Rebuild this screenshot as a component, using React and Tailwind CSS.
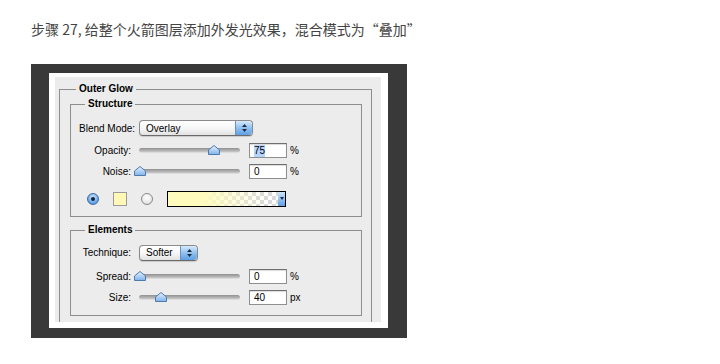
function Thumb({ left }) {
  return (
    <svg
      className="absolute top-[-3px]"
      style={{ left: left - 6 }}
      width="12"
      height="10"
      viewBox="0 0 12 10"
    >
      <defs>
        <linearGradient id="tg" x1="0" y1="0" x2="0" y2="1">
          <stop offset="0" stopColor="#e8f3ff" />
          <stop offset="1" stopColor="#7fb2ea" />
        </linearGradient>
      </defs>
      <path d="M6 0.5 L11.5 5 L11.5 9.5 L0.5 9.5 L0.5 5 Z" fill="url(#tg)" stroke="#4f79a8" strokeWidth="1" />
    </svg>
  );
}

function Slider({ pos }) {
  return (
    <div className="relative w-[101px] h-[5px] rounded-full bg-linear-to-b from-[#8f8f8f] to-[#c9c9c9] border-b border-[#dcdcdc]">
      <Thumb left={pos} />
    </div>
  );
}

function Field({ value, unit, selected }) {
  return (
    <div className="flex items-center">
      <div className="ml-[9px] w-[38px] h-[15px] bg-white border border-[#8f8f8f] border-t-[#6f6f6f] shadow-[inset_0_1px_1px_rgba(0,0,0,0.15)] pl-[4px] flex items-center leading-[12px]">
        {selected ? <span className="bg-[#b5d5ff]">{value}</span> : value}
      </div>
      <span className="ml-[3px]">{unit}</span>
    </div>
  );
}

function Stepper() {
  return (
    <div className="w-[17px] h-full rounded-r-[4px] bg-linear-to-b from-[#d7eafd] via-[#8fc0f1] to-[#5f9fe4] border-l border-[#6d8fb8] flex flex-col items-center justify-center gap-[2px]">
      <svg width="5" height="3" viewBox="0 0 5 3"><path d="M2.5 0 L5 3 L0 3 Z" fill="#1d2c40" /></svg>
      <svg width="5" height="3" viewBox="0 0 5 3"><path d="M0 0 L5 0 L2.5 3 Z" fill="#1d2c40" /></svg>
    </div>
  );
}

function Popup({ label, width }) {
  return (
    <div
      className="h-[16px] rounded-[4px] border border-[#8a8a8a] border-b-[#6a6a6a] bg-linear-to-b from-white via-[#f7f7f7] to-[#e2e2e2] shadow-[0_1px_1px_rgba(0,0,0,0.15)] flex items-stretch overflow-hidden"
      style={{ width }}
    >
      <div className="flex-1 pl-[6px] flex items-center">{label}</div>
      <Stepper />
    </div>
  );
}

function Radio({ on }) {
  return on ? (
    <div className="w-[12px] h-[12px] rounded-full border border-[#3b6ea5] bg-[radial-gradient(circle_at_50%_35%,#d8ecff,#5d9ee6_70%,#3f80cf)] flex items-center justify-center">
      <div className="w-[4px] h-[4px] rounded-full bg-[#10233a]" />
    </div>
  ) : (
    <div className="w-[12px] h-[12px] rounded-full border border-[#8a8a8a] bg-[radial-gradient(circle_at_50%_35%,#ffffff,#e9e9e9_60%,#c9c9c9)]" />
  );
}

export default function App() {
  return (
    <div className="w-[720px] h-[364px] bg-white overflow-hidden">
      <p className="pt-[20px] pl-[31px] text-[14px] leading-[18px] text-[#444444] font-['Noto_Sans_CJK_SC','Noto_Sans',sans-serif]">
        步骤 27, 给整个火箭图层添加外发光效果，混合模式为“叠加”
      </p>
      <div className="mt-[26px] ml-[31px] w-[376px] h-[274px] bg-[#393939] pt-[9px] pl-[18px] pr-[19px] pb-[10px]">
        <div className="h-full bg-white pt-[4px] pl-[6px] pr-[7px] pb-[6px]">
          <div className="h-full bg-[#ececec] overflow-hidden pt-[6px] pl-[4px] font-['Liberation_Sans',Arial,sans-serif] text-[10px] text-black">
            <fieldset className="w-[313px] h-[300px] border border-[#8e8e8e] pl-[10px]">
              <legend className="ml-[6px] px-[3px] font-bold leading-[12px]">Outer Glow</legend>

              <fieldset className="mt-[3px] w-[292px] border border-[#8e8e8e] pl-[8px] pb-[10px]">
                <legend className="ml-[6px] px-[3px] font-bold leading-[12px]">Structure</legend>

                <div className="mt-[10px] flex items-center h-[16px]">
                  <div className="w-[60px] whitespace-nowrap">Blend Mode:</div>
                  <Popup label="Overlay" width={114} />
                </div>

                <div className="mt-[7px] flex items-center h-[15px]">
                  <div className="w-[52px] text-right">Opacity:</div>
                  <div className="ml-[8px]"><Slider pos={75} /></div>
                  <Field value="75" unit="%" selected />
                </div>

                <div className="mt-[6px] flex items-center h-[15px]">
                  <div className="w-[52px] text-right">Noise:</div>
                  <div className="ml-[8px]"><Slider pos={1} /></div>
                  <Field value="0" unit="%" />
                </div>

                <div className="mt-[12px] flex items-center h-[15px]">
                  <div className="ml-[8px]"><Radio on /></div>
                  <div className="ml-[14px] w-[14px] h-[14px] border border-[#9a9a9a] bg-[#fff8b6]" />
                  <div className="ml-[14px]"><Radio /></div>
                  <div className="ml-[14px] w-[119px] h-[16px] border border-black flex">
                    <div className="flex-1 bg-[image:repeating-conic-gradient(#d9d9d9_0%_25%,#ffffff_0%_50%)] bg-[length:8px_8px]">
                      <div className="h-full bg-linear-to-r from-[#fffbbd] from-30% to-[rgba(255,251,189,0)] to-90%" />
                    </div>
                    <div className="w-[7px] bg-linear-to-b from-[#cfe5fc] to-[#5f9fe4] flex items-center justify-center">
                      <svg width="4" height="3" viewBox="0 0 4 3"><path d="M0 0 L4 0 L2 3 Z" fill="#1d2c40" /></svg>
                    </div>
                  </div>
                </div>
              </fieldset>

              <fieldset className="mt-[7px] w-[292px] border border-[#8e8e8e] pl-[8px] pb-[10px]">
                <legend className="ml-[6px] px-[3px] font-bold leading-[12px]">Elements</legend>

                <div className="mt-[8px] flex items-center h-[17px]">
                  <div className="w-[52px] text-right">Technique:</div>
                  <div className="ml-[8px]"><Popup label="Softer" width={59} /></div>
                </div>

                <div className="mt-[8px] flex items-center h-[15px]">
                  <div className="w-[52px] text-right">Spread:</div>
                  <div className="ml-[8px]"><Slider pos={1} /></div>
                  <Field value="0" unit="%" />
                </div>

                <div className="mt-[6px] flex items-center h-[15px]">
                  <div className="w-[52px] text-right">Size:</div>
                  <div className="ml-[8px]"><Slider pos={22} /></div>
                  <Field value="40" unit="px" />
                </div>
              </fieldset>
            </fieldset>
          </div>
        </div>
      </div>
    </div>
  );
}
